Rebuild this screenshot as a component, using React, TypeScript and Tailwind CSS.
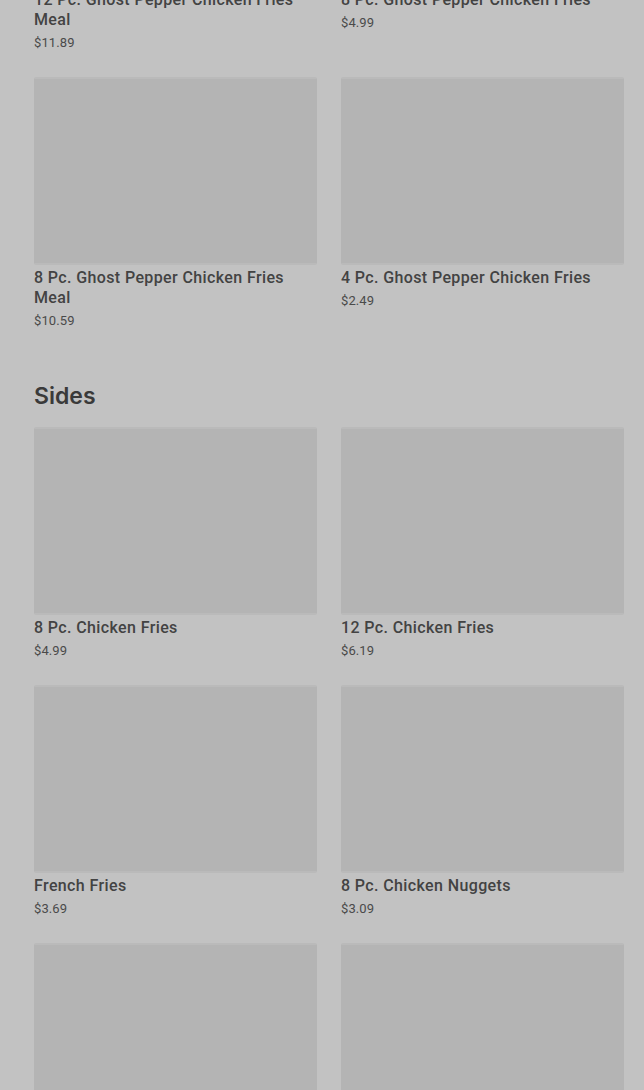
import React from "react";

type Item = { name: string; price: string };

function Card({ item }: { item: Item }) {
  return (
    <div className="flex flex-col">
      <div className="h-[188px] w-full rounded-[2px] bg-[#b4b4b4] border-y-2 border-[#bababa]" />
      <div className="mt-[3px] text-[16px] leading-[20px] font-medium text-[#434343] tracking-[0.38px]" style={{ fontFamily: "Roboto, 'Liberation Sans', sans-serif" }}>
        {item.name}
      </div>
      <div className="mt-[3px] text-[13px] leading-[20px] text-[#4a4a4a] tracking-[0.1px]" style={{ fontFamily: "Roboto, 'Liberation Sans', sans-serif" }}>
        {item.price}
      </div>
    </div>
  );
}

const top: Item[] = [
  { name: "12 Pc. Ghost Pepper Chicken Fries Meal", price: "$11.89" },
  { name: "8 Pc. Ghost Pepper Chicken Fries", price: "$4.99" },
  { name: "8 Pc. Ghost Pepper Chicken Fries Meal", price: "$10.59" },
  { name: "4 Pc. Ghost Pepper Chicken Fries", price: "$2.49" },
];

const sides: Item[] = [
  { name: "8 Pc. Chicken Fries", price: "$4.99" },
  { name: "12 Pc. Chicken Fries", price: "$6.19" },
  { name: "French Fries", price: "$3.69" },
  { name: "8 Pc. Chicken Nuggets", price: "$3.09" },
  { name: "Onion Rings", price: "$2.99" },
  { name: "Mozzarella Sticks", price: "$3.49" },
];

export default function App() {
  return (
    <div className="w-[644px] h-[1090px] overflow-hidden bg-[#c2c2c2]">
      <div className="pl-[34px] pr-[20px] -mt-[201px]">
        <div className="grid grid-cols-2 gap-x-6 gap-y-6">
          {top.map((it) => (
            <Card key={it.name} item={it} />
          ))}
        </div>
        <h2
          className="mt-[49px] mb-[15px] text-[23px] leading-[32px] font-semibold text-[#3a3a3a]"
          style={{ fontFamily: "Inter, 'Liberation Sans', sans-serif" }}
        >
          Sides
        </h2>
        <div className="grid grid-cols-2 gap-x-6 gap-y-6">
          {sides.map((it) => (
            <Card key={it.name} item={it} />
          ))}
        </div>
      </div>
    </div>
  );
}
